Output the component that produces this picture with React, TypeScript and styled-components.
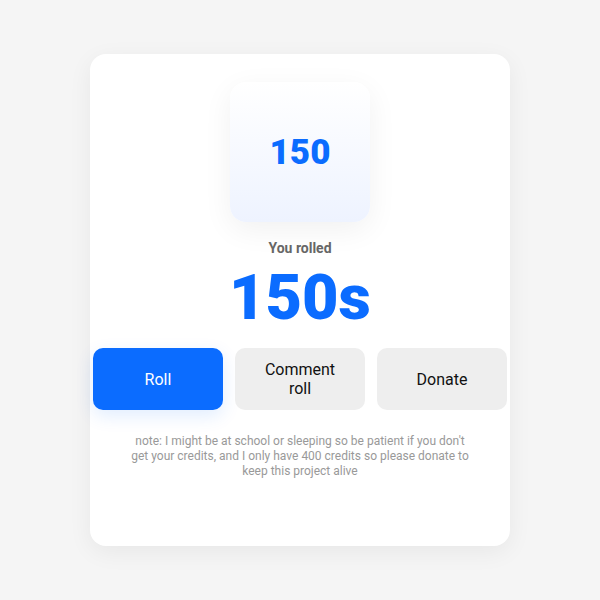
import React from "react";
import styled, { createGlobalStyle } from "styled-components";

const GlobalStyle = createGlobalStyle`
  * { box-sizing: border-box; }
  body {
    margin: 0;
    background: #f5f5f5;
    font-family: Roboto, "Liberation Sans", sans-serif;
  }
`;

const Page = styled.div`
  min-height: 100vh;
  display: flex;
  align-items: center;
  justify-content: center;
`;

const Card = styled.main`
  width: 70%;
  min-height: 82vh;
  padding: 28px 3px;
  display: flex;
  flex-direction: column;
  align-items: center;
  background: #fff;
  border-radius: 16px;
  box-shadow: 0 6px 24px rgba(0, 0, 0, 0.06);
  text-align: center;
`;

const Dice = styled.div`
  width: 140px;
  height: 140px;
  display: flex;
  align-items: center;
  justify-content: center;
  border-radius: 16px;
  background: linear-gradient(180deg, #fff, #eef3ff);
  box-shadow: 0 8px 30px rgba(0, 0, 0, 0.06);
  color: #0b6cff;
  font-size: 35px;
  font-weight: 900;
`;

const Label = styled.p`
  margin: 18px 0 0;
  color: #666;
  font-size: 14px;
  line-height: 16px;
  font-weight: 700;
`;

const Result = styled.h1`
  margin: 10px 0 0;
  color: #0b6cff;
  font-size: 63px;
  line-height: 64px;
  font-weight: 900;
`;

const Actions = styled.div`
  align-self: stretch;
  display: grid;
  grid-template-columns: repeat(3, 1fr);
  gap: 12px;
  margin-top: 18px;
`;

const Button = styled.button<{ $primary?: boolean }>`
  min-height: 62px;
  padding: 12px 20px;
  border: 0;
  border-radius: 10px;
  background: ${({ $primary }) => ($primary ? "#0b6cff" : "#eee")};
  color: ${({ $primary }) => ($primary ? "#fff" : "#111")};
  box-shadow: ${({ $primary }) => ($primary ? "0 6px 18px rgba(11, 108, 255, 0.12)" : "none")};
  font: 400 16px/19px Roboto, "Liberation Sans", sans-serif;
  cursor: pointer;
`;

const Note = styled.p`
  max-width: 340px;
  margin: 24px 0 0;
  color: #999;
  font-size: 12px;
  line-height: 15px;
`;

export default function App() {
  return (
    <>
      <GlobalStyle />
      <Page>
        <Card>
          <Dice>150</Dice>
          <Label>You rolled</Label>
          <Result>150s</Result>
          <Actions>
            <Button type="button" $primary>Roll</Button>
            <Button type="button">Comment roll</Button>
            <Button type="button">Donate</Button>
          </Actions>
          <Note>
            note: I might be at school or sleeping so be patient if you don't get your credits, and I
            only have 400 credits so please donate to keep this project alive
          </Note>
        </Card>
      </Page>
    </>
  );
}
